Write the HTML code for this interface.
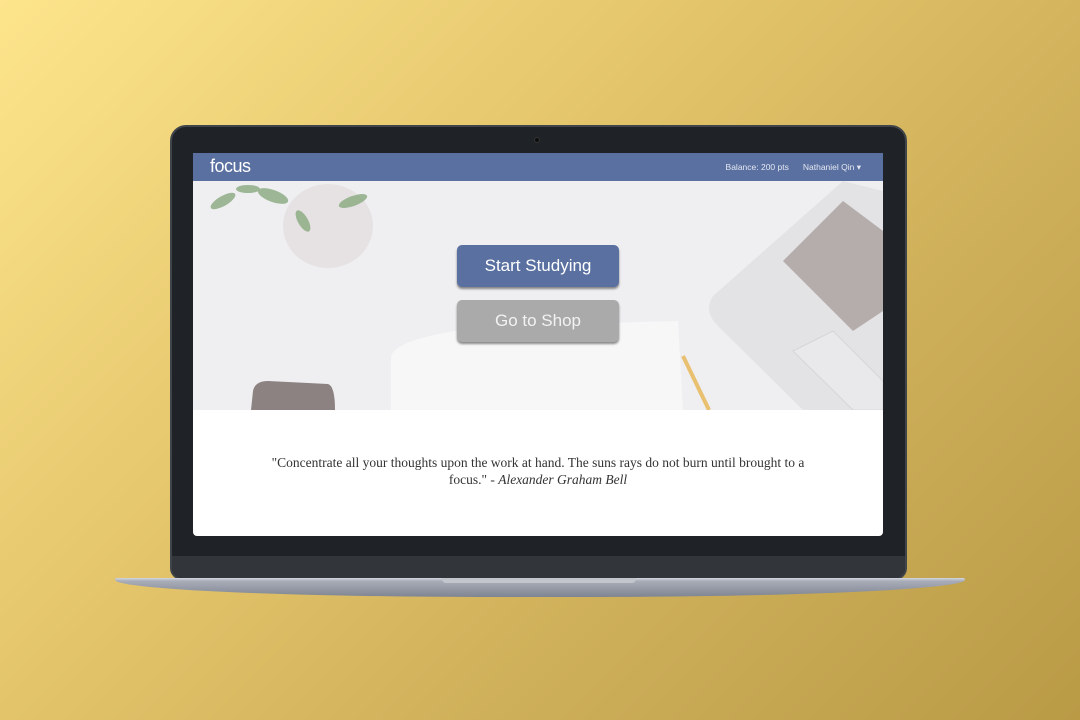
<!DOCTYPE html>
<html><head><meta charset="utf-8"><style>
*{margin:0;padding:0;box-sizing:border-box}
body{width:1080px;height:720px;overflow:hidden;background:linear-gradient(135deg,#fde58c 0%,#e3c46a 40%,#c9aa55 75%,#b99a45 100%);font-family:"Liberation Sans",sans-serif;position:relative}
.lid{position:absolute;left:170px;top:125px;width:737px;height:455px;background:#1f2226;border:2px solid #40454c;border-radius:16px 16px 12px 12px;overflow:hidden}
.band{position:absolute;left:0;right:0;bottom:0;height:22px;background:#32353a}
.cam{position:absolute;left:362px;top:10px;width:6px;height:6px;border-radius:50%;background:#0c0d0f;border:1px solid #333}
.screen{position:absolute;left:193px;top:153px;width:690px;height:383px;background:#fff;border-radius:0 0 4px 4px;overflow:hidden}
.nav{height:28px;background:#5a70a0;color:#fff;position:relative}
.logo{position:absolute;left:17px;top:3px;font-size:18px;letter-spacing:-0.5px}
.navr{position:absolute;right:22px;top:9px;font-size:8.5px;color:#e4e8f2}
.navr span{margin-left:14px}
.hero{height:229px;background:#efeff2;position:relative;overflow:hidden}
.btn{position:absolute;left:264px;width:162px;height:42px;border-radius:5px;color:#fff;font-size:17px;text-align:center;line-height:42px;box-shadow:0 2px 2px rgba(0,0,0,.45)}
.b1{top:64px;background:#5a70a0}
.b2{top:119px;background:#aaaaaa;color:#f2f2f2}
.quote{position:absolute;top:301px;left:78px;right:78px;text-align:center;font-family:"Liberation Serif",serif;font-size:13.5px;line-height:17px;color:#333}
.base{position:absolute;left:115px;top:578px;width:850px;height:19px;background:linear-gradient(#d4d7de 0,#a9adb8 3px,#7f8492 100%);border-radius:2px 2px 50% 50%/2px 2px 100% 100%}
.notch{position:absolute;left:442px;top:578px;width:194px;height:5px;background:#c2c5cc;border-radius:0 0 4px 4px}
</style></head><body>
<div class="lid"><div class="cam"></div><div class="band"></div></div>
<div class="screen">
 <div class="nav"><div class="logo">focus</div><div class="navr"><span>Balance: 200 pts</span><span>Nathaniel Qin ▾</span></div></div>
 <div class="hero">
  <svg width="690" height="229" style="position:absolute;left:0;top:0">
   <ellipse cx="135" cy="45" rx="45" ry="42" fill="#e6e2e4"/>
   <g fill="#8fae86" opacity=".85"><ellipse cx="30" cy="20" rx="14" ry="5" transform="rotate(-30 30 20)"/><ellipse cx="80" cy="15" rx="16" ry="6" transform="rotate(20 80 15)"/><ellipse cx="110" cy="40" rx="12" ry="5" transform="rotate(60 110 40)"/><ellipse cx="160" cy="20" rx="15" ry="5" transform="rotate(-20 160 20)"/><ellipse cx="55" cy="8" rx="12" ry="4"/></g>
   <path d="M60 210 Q62 200 75 200 L135 203 Q142 205 142 229 L58 229Z" fill="#8c8282"/>
   <path d="M198 175 Q205 155 300 145 L485 140 L490 229 L198 229Z" fill="#f7f7f8"/>
   <line x1="490" y1="175" x2="516" y2="229" stroke="#e8c070" stroke-width="4"/>
   <path d="M690 10 L650 0 L520 115 Q510 130 525 145 L610 229 L690 229Z" fill="#e3e2e5"/>
   <path d="M690 50 L650 20 L590 80 L660 150 L690 130Z" fill="#a59a98" opacity=".75"/>
   <path d="M600 170 L640 150 L690 200 L690 229 L660 229Z" fill="#e9e9ec" stroke="#d6d6da"/>
  </svg>
  <div class="btn b1">Start Studying</div>
  <div class="btn b2">Go to Shop</div>
 </div>
 <div class="quote">"Concentrate all your thoughts upon the work at hand. The suns rays do not burn until brought to a focus." - <i>Alexander Graham Bell</i></div>
</div>
<div class="base"></div><div class="notch"></div>
</body></html>
